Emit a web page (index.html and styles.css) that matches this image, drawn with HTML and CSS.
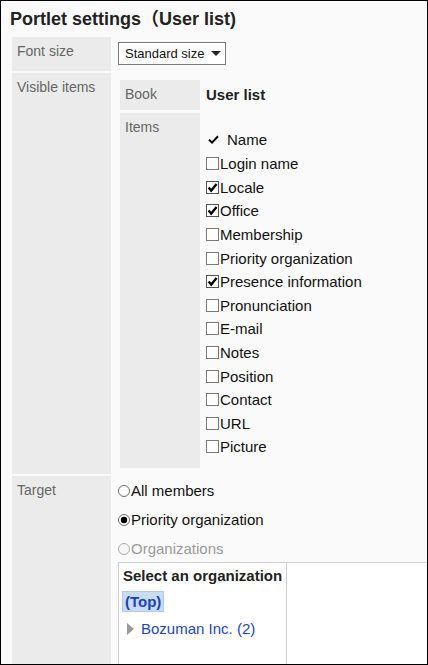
FILE: index.html
```html
<!DOCTYPE html>
<html lang="en">
<head>
<meta charset="utf-8">
<title>Portlet settings (User list)</title>
<link rel="stylesheet" href="styles.css">
</head>
<body>
<div class="frame">
  <h1 class="title">Portlet settings（User list)</h1>
  <div class="form">
    <div class="label">Font size</div>
    <div class="value value-select">
      <div class="select"><span>Standard size</span><span class="caret"></span></div>
    </div>

    <div class="label">Visible items</div>
    <div class="value value-inner">
      <div class="inner">
        <div class="ilabel">Book</div>
        <div class="ivalue book">User list</div>
        <div class="ilabel">Items</div>
        <div class="ivalue items">
          <div class="item item-fixed">
            <svg class="tick" width="11" height="9" viewBox="0 0 11 9"><path d="M1 4.6 L4 7.6 L10 1.2" fill="none" stroke="#000" stroke-width="2"/></svg>
            <span>Name</span>
          </div>
          <div class="item"><svg class="cb" viewBox="0 0 13 13"><rect x="0.5" y="0.5" width="12" height="12" fill="#fff" stroke="#7a7a7a"/></svg><span>Login name</span></div>
          <div class="item"><svg class="cb" viewBox="0 0 13 13"><rect x="0.5" y="0.5" width="12" height="12" fill="#fff" stroke="#555"/><path d="M2.6 6.6 L5.2 9.6 L10.6 3" fill="none" stroke="#000" stroke-width="2.3"/></svg><span>Locale</span></div>
          <div class="item"><svg class="cb" viewBox="0 0 13 13"><rect x="0.5" y="0.5" width="12" height="12" fill="#fff" stroke="#555"/><path d="M2.6 6.6 L5.2 9.6 L10.6 3" fill="none" stroke="#000" stroke-width="2.3"/></svg><span>Office</span></div>
          <div class="item"><svg class="cb" viewBox="0 0 13 13"><rect x="0.5" y="0.5" width="12" height="12" fill="#fff" stroke="#7a7a7a"/></svg><span>Membership</span></div>
          <div class="item"><svg class="cb" viewBox="0 0 13 13"><rect x="0.5" y="0.5" width="12" height="12" fill="#fff" stroke="#7a7a7a"/></svg><span>Priority organization</span></div>
          <div class="item"><svg class="cb" viewBox="0 0 13 13"><rect x="0.5" y="0.5" width="12" height="12" fill="#fff" stroke="#555"/><path d="M2.6 6.6 L5.2 9.6 L10.6 3" fill="none" stroke="#000" stroke-width="2.3"/></svg><span>Presence information</span></div>
          <div class="item"><svg class="cb" viewBox="0 0 13 13"><rect x="0.5" y="0.5" width="12" height="12" fill="#fff" stroke="#7a7a7a"/></svg><span>Pronunciation</span></div>
          <div class="item"><svg class="cb" viewBox="0 0 13 13"><rect x="0.5" y="0.5" width="12" height="12" fill="#fff" stroke="#7a7a7a"/></svg><span>E-mail</span></div>
          <div class="item"><svg class="cb" viewBox="0 0 13 13"><rect x="0.5" y="0.5" width="12" height="12" fill="#fff" stroke="#7a7a7a"/></svg><span>Notes</span></div>
          <div class="item"><svg class="cb" viewBox="0 0 13 13"><rect x="0.5" y="0.5" width="12" height="12" fill="#fff" stroke="#7a7a7a"/></svg><span>Position</span></div>
          <div class="item"><svg class="cb" viewBox="0 0 13 13"><rect x="0.5" y="0.5" width="12" height="12" fill="#fff" stroke="#7a7a7a"/></svg><span>Contact</span></div>
          <div class="item"><svg class="cb" viewBox="0 0 13 13"><rect x="0.5" y="0.5" width="12" height="12" fill="#fff" stroke="#7a7a7a"/></svg><span>URL</span></div>
          <div class="item"><svg class="cb" viewBox="0 0 13 13"><rect x="0.5" y="0.5" width="12" height="12" fill="#fff" stroke="#7a7a7a"/></svg><span>Picture</span></div>
        </div>
      </div>
    </div>

    <div class="label">Target</div>
    <div class="value value-target">
      <div class="radio"><svg class="rd" viewBox="0 0 12 12"><circle cx="6" cy="6" r="5.5" fill="#fff" stroke="#6e6e6e"/></svg><span>All members</span></div>
      <div class="radio"><svg class="rd" viewBox="0 0 12 12"><circle cx="6" cy="6" r="5.5" fill="#fff" stroke="#6e6e6e"/><circle cx="6" cy="6" r="3.2" fill="#000"/></svg><span>Priority organization</span></div>
      <div class="radio disabled"><svg class="rd" viewBox="0 0 12 12"><circle cx="6" cy="6" r="5.5" fill="#f5f5f5" stroke="#ababab"/></svg><span>Organizations</span></div>
      <div class="orgbox">
        <div class="orgtree">
          <div class="orghead">Select an organization</div>
          <div class="orgtop"><span class="topsel">(Top)</span></div>
          <div class="orgnode"><span class="arrow"></span><span class="orglink">Bozuman Inc. (2)</span></div>
        </div>
        <div class="orglist"></div>
      </div>
    </div>
  </div>
</div>
</body>
</html>
```
FILE: styles.css
```css
html, body {
  margin: 0;
  padding: 0;
  background: #fff;
}

.frame {
  box-sizing: border-box;
  width: 428px;
  height: 665px;
  border: 1px solid #000;
  overflow: hidden;
  background: #fafafa;
  font-family: "Liberation Sans", Arial, sans-serif;
  color: #222;
}

.title {
  margin: 0 0 7px;
  padding: 7px 0 0 9px;
  font-size: 18px;
  line-height: 22px;
  font-weight: bold;
  color: #222;
  font-family: "Liberation Sans", "Noto Sans CJK JP", sans-serif;
}

.form {
  display: grid;
  grid-template-columns: 99px 1fr;
  gap: 2px;
  margin-left: 11px;
}

.label {
  background: #ebebeb;
  color: #666;
  font-size: 14px;
  line-height: 17px;
  padding: 6px 5px;
}

.value-select {
  padding: 5px 5px 6px;
}

.select {
  box-sizing: border-box;
  width: 108px;
  height: 23px;
  border: 1px solid #7a7a7a;
  background: #fff;
  display: flex;
  align-items: center;
  padding-left: 6px;
  font-size: 13px;
  color: #111;
}

.caret {
  width: 0;
  height: 0;
  margin-left: 6px;
  border-left: 5px solid transparent;
  border-right: 5px solid transparent;
  border-top: 5px solid #222;
}

.value-inner {
  padding: 7px 7px 6px;
}

.inner {
  display: grid;
  grid-template-columns: 80px 1fr;
  gap: 3px;
}

.ilabel {
  background: #ebebeb;
  color: #666;
  font-size: 14px;
  line-height: 17px;
  padding: 6px 5px 7px;
}

.ivalue {
  padding-left: 3px;
}

.book {
  font-size: 15px;
  font-weight: bold;
  line-height: 17px;
  padding-top: 6px;
  color: #222;
}

.items {
  padding-top: 13px;
  padding-bottom: 9px;
  font-size: 15px;
  color: #111;
}

.item {
  display: flex;
  align-items: center;
  height: 23.6px;
}

.item-fixed {
  height: 26px;
}

.tick {
  margin-left: 2px;
  margin-right: 8px;
}

.cb {
  width: 13px;
  height: 13px;
  flex: none;
  margin-right: 1px;
}

.value-target {
  padding: 5px 0 0 5px;
  font-size: 15px;
  color: #111;
}

.radio {
  display: flex;
  align-items: center;
  height: 20px;
  margin-bottom: 9px;
}

.radio.disabled {
  color: #9a9a9a;
  margin-bottom: 3px;
}

.rd {
  width: 12px;
  height: 12px;
  flex: none;
  margin-right: 1px;
}

.orgbox {
  display: flex;
  width: 330px;
  height: 220px;
  border: 1px solid #cfcfcf;
  background: #fff;
}

.orgtree {
  width: 163px;
  flex: none;
  border-right: 1px solid #cfcfcf;
  padding-left: 4px;
}

.orghead {
  font-weight: bold;
  font-size: 15px;
  line-height: 20px;
  padding-top: 3px;
  color: #222;
}

.orgtop {
  margin-top: 5px;
  margin-left: -1px;
}

.topsel {
  display: inline-block;
  box-sizing: border-box;
  height: 21px;
  line-height: 19px;
  padding: 0 2px;
  background: #c8dcf3;
  border: 1px solid #afcaea;
  color: #1a3fc4;
  font-weight: bold;
  font-size: 15px;
}

.orgnode {
  display: flex;
  align-items: center;
  margin-top: 7px;
  margin-left: 4px;
  height: 20px;
}

.arrow {
  width: 0;
  height: 0;
  border-top: 6px solid transparent;
  border-bottom: 6px solid transparent;
  border-left: 7px solid #9a9a9a;
  margin-right: 7px;
}

.orglink {
  color: #1a45c9;
  font-size: 15px;
}

.orglist {
  flex: 1;
}
```
